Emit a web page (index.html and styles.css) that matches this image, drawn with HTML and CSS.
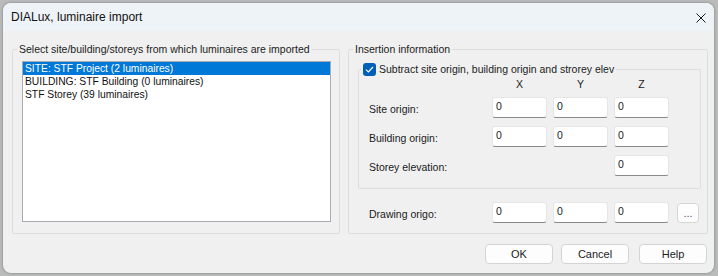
FILE: index.html
```html
<!DOCTYPE html>
<html>
<head>
<meta charset="utf-8">
<link rel="stylesheet" href="styles.css">
</head>
<body>
<div class="dialog">
  <div class="titlebar">
    <span class="title">DIALux, luminaire import</span>
    <span class="close"><svg width="10" height="10" viewBox="0 0 10 10"><path d="M0.5 0.5 L9.5 9.5 M9.5 0.5 L0.5 9.5" stroke="#1a1a1a" stroke-width="1" fill="none"/></svg></span>
  </div>
  <div class="content">
    <div class="groups">
      <fieldset class="group group-left">
        <legend>Select site/building/storeys from which luminaires are imported</legend>
        <div class="listbox">
          <div class="item selected">SITE: STF Project (2 luminaires)</div>
          <div class="item">BUILDING: STF Building (0 luminaires)</div>
          <div class="item">STF Storey (39 luminaires)</div>
        </div>
      </fieldset>
      <fieldset class="group group-right">
        <legend>Insertion information</legend>
        <fieldset class="group inner">
          <legend class="check-legend"><span class="checkbox"><svg width="9" height="7" viewBox="0 0 9 7"><path d="M1 3.6 L3.4 6 L8 1" stroke="#fff" stroke-width="1.2" fill="none"/></svg></span><span>Subtract site origin, building origin and strorey elev</span></legend>
          <div class="grid">
            <span></span><span class="axis">X</span><span class="axis">Y</span><span class="axis">Z</span>
            <span class="lbl">Site origin:</span><span class="input">0</span><span class="input">0</span><span class="input">0</span>
            <span class="lbl">Building origin:</span><span class="input">0</span><span class="input">0</span><span class="input">0</span>
            <span class="lbl">Storey elevation:</span><span></span><span></span><span class="input">0</span>
          </div>
        </fieldset>
        <div class="origo">
          <span class="lbl">Drawing origo:</span><span class="input">0</span><span class="input">0</span><span class="input">0</span><span class="btn small">...</span>
        </div>
      </fieldset>
    </div>
    <div class="buttons">
      <span class="btn">OK</span><span class="btn">Cancel</span><span class="btn">Help</span>
    </div>
  </div>
</div>
</body>
</html>
```

FILE: styles.css
```css
html, body {
  margin: 0;
  padding: 0;
}
body {
  width: 718px;
  height: 276px;
  background: #b9bcbb;
  font-family: "Liberation Sans", Arial, sans-serif;
  font-size: 10.5px;
  color: #1b1b1b;
  overflow: hidden;
}
.dialog {
  margin: 3px 0 0 3px;
  width: 711px;
  height: 270px;
  border-radius: 8px;
  background: #f0f0f0;
  box-shadow: 0 0 3px rgba(0,0,0,0.35);
  overflow: hidden;
  display: flex;
  flex-direction: column;
}
.titlebar {
  height: 28px;
  flex: none;
  background: #eef3f8;
  display: flex;
  align-items: center;
  justify-content: space-between;
  padding: 0 8px 0 8px;
}
.title {
  font-size: 12px;
  color: #111;
}
.close {
  display: flex;
  margin-top: 1px;
}
.content {
  flex: 1;
  display: flex;
  flex-direction: column;
  padding: 11px 6px 0 9px;
}
.groups {
  display: flex;
  gap: 8px;
}
.group {
  margin: 0;
  padding: 0;
  border: 1px solid #dcdcdc;
  border-radius: 2px;
  min-width: 0;
  box-sizing: border-box;
}
.group > legend {
  padding: 0 2px;
  margin-left: 4px;
  line-height: 15px;
  height: 15px;
  white-space: nowrap;
}
.group-left {
  width: 328px;
  height: 192px;
}
.listbox {
  margin: 4px 0 0 9px;
  width: 309px;
  height: 161px;
  box-sizing: border-box;
  background: #fff;
  border: 1px solid #a9abb2;
  font-size: 10.3px;
}
.item {
  height: 13px;
  line-height: 13px;
  padding-left: 2px;
  color: #111;
  white-space: nowrap;
}
.item.selected {
  background: #0078d7;
  color: #fff;
}
.group-right {
  width: 360px;
  height: 192px;
}
.inner {
  margin: 5px 6px 0 9px;
  height: 127px;
  border-color: #dedede;
}
.inner > .check-legend {
  margin-left: 2px;
  padding: 0 2px;
  display: flex;
  align-items: center;
  gap: 3px;
}
.checkbox {
  width: 13px;
  height: 13px;
  box-sizing: border-box;
  background: #005fb8;
  border-radius: 3px;
  display: flex;
  align-items: center;
  justify-content: center;
}
.grid {
  display: grid;
  grid-template-columns: 117px 55px 55px 55px;
  grid-template-rows: 12px 21px 21px 21px;
  column-gap: 6px;
  row-gap: 8px;
  margin-left: 10px;
  align-items: center;
}
.grid .axis {
  align-self: start;
  text-align: center;
  line-height: 14px;
}
.lbl {
  padding-top: 2px;
  white-space: nowrap;
}
.input {
  height: 21px;
  box-sizing: border-box;
  background: #fff;
  border: 1px solid #e6e6e6;
  border-bottom: 1px solid #8a8a8a;
  border-radius: 3px;
  padding: 1px 0 0 3px;
  line-height: 15px;
}
.origo {
  display: grid;
  grid-template-columns: 117px 55px 55px 55px 22px;
  column-gap: 6px;
  align-items: center;
  margin: 13px 0 0 20px;
}
.origo .small {
  margin-left: 2px;
  width: 22px;
  height: 20px;
  line-height: 16px;
  color: #555;
}
.btn {
  display: flex;
  align-items: center;
  justify-content: center;
  box-sizing: border-box;
  background: #fdfdfd;
  border: 1px solid #d4d4d4;
  border-radius: 4px;
  font-size: 11px;
}
.buttons {
  display: flex;
  justify-content: flex-end;
  gap: 8px;
  margin-top: 10px;
  padding-right: 1px;
}
.buttons .btn {
  width: 68px;
  height: 20px;
}
.buttons .btn:nth-child(3) { margin-left: 2px; }
```
